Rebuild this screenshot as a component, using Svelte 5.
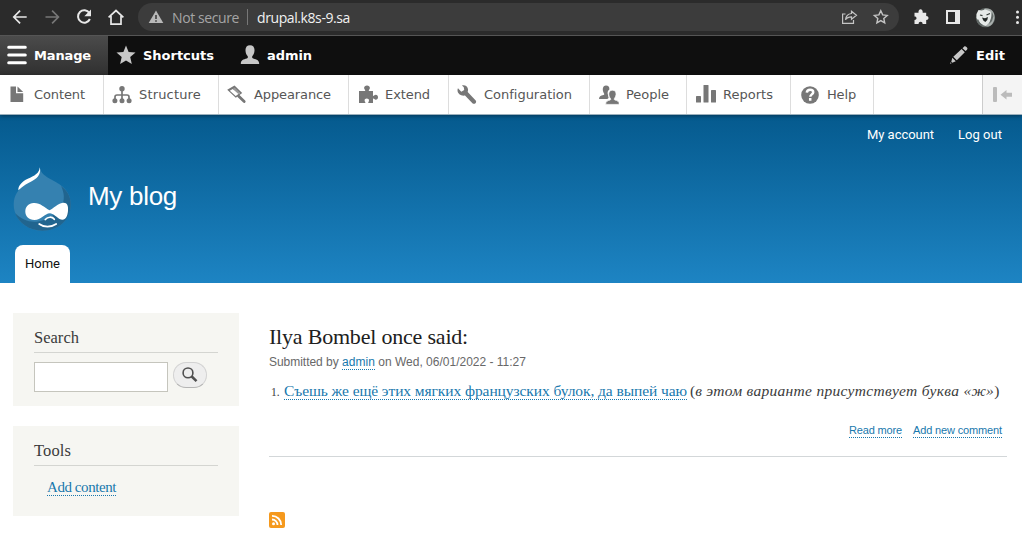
<script>
  const tray = [
    { label: 'Content', w: 104, tw: 51, icon: 'content' },
    { label: 'Structure', w: 115, tw: 62, icon: 'structure' },
    { label: 'Appearance', w: 130, tw: 77, icon: 'appearance' },
    { label: 'Extend', w: 100, tw: 45, icon: 'extend' },
    { label: 'Configuration', w: 141, tw: 88, icon: 'config' },
    { label: 'People', w: 97, tw: 43, icon: 'people' },
    { label: 'Reports', w: 104, tw: 50, icon: 'reports' },
    { label: 'Help', w: 83, tw: 29, icon: 'help' }
  ];

  // Adjusts tracking so a label occupies its designed width whatever font is available.
  function fit(node, width) {
    const natural = node.getBoundingClientRect().width;
    const count = [...node.textContent.trim()].length;
    node.style.letterSpacing = `${(width - natural) / count}px`;
  }
</script>

{#snippet puzzle()}
  <path d="M1 6h6c1-.6-.9-1.400-.9-3C6.100 1.300 7.300.4 9 .4s2.900.9 2.900 2.600c0 1.600-1.900 2.400-.9 3h4v4.600c.6 1 1.400-.9 2.700-.9 1.500 0 2.300 1 2.300 2.500s-.8 2.500-2.300 2.500c-1.300 0-2.100-1.900-2.700-.9V18h-4.500c-1-.5.500-1.300.5-2.600 0-1.200-.9-1.900-2.200-1.900s-2.200.7-2.200 1.900c0 1.300 1.500 2.100.5 2.600H1V6z" />
{/snippet}

<div class="page">
  <div class="browser">
    <svg class="nav-icons" width="136" height="35" viewBox="0 0 136 35" fill="none" stroke="#e8e8e8" stroke-width="1.700">
      <path d="M26.700 17H14M20.100 10.700 13.800 17l6.300 6.300" />
      <path stroke="#777" d="M45.500 17h12.700M52.100 10.700l6.300 6.300-6.300 6.300" />
      <path stroke-width="2" d="M89.400 13A6.200 6.200 0 1 0 89.900 19" />
      <path fill="#e8e8e8" stroke="none" d="M91 9.500v6.700h-6.700z" />
      <path d="M108.600 17.300 116 10.500l7.400 6.800M111 16v8.100h10V16" />
    </svg>
    <div class="address">
      <svg class="warn" width="16" height="14" viewBox="0 0 16 14"><path fill="#b8b8b8" d="M8 .4 15.300 13H.7z" /><path stroke="#3c3c3c" stroke-width="1.600" d="M8 5v4M8 10.200v1.600" /></svg>
      <span class="secure" use:fit={67}>Not secure</span>
      <i class="divider"></i>
      <span class="url" use:fit={93}>drupal.k8s-9.sa</span>
      <svg class="addr-icons" width="50" height="20" viewBox="840 7 50 20" fill="none" stroke="#c5c5c5" stroke-width="1.200">
        <path d="M845.500 14h-2.900v9.400h10.900V20M851.500 11.200l5 4-5 4v-2.400c-3 0-4.700.8-6 2.900.4-3.700 2.300-5.800 6-6.200z" />
        <path stroke-width="1.400" d="m880.800 10.700 1.900 4.200 4.500.5-3.400 3 .9 4.500-3.900-2.300-3.900 2.300.9-4.500-3.400-3 4.500-.5z" />
      </svg>
    </div>
    <svg class="ext-icons" width="123" height="35" viewBox="899 0 123 35">
      <path fill="#e8e8e8" d="M914.500 12.700h4c-.3-2.200.8-3.400 2.100-3.400s2.400 1.200 2.100 3.400h3.500v3.400c1.500 0 2.300.7 2.300 2s-.8 2-2.300 2V24h-3.600c0-1.500-.8-2.300-2-2.300s-2 .8-2 2.300h-4.100v-4c1.300 0 2-.7 2-1.700s-.7-1.700-2-1.700z" />
      <path fill="#e8e8e8" fill-rule="evenodd" d="M946 10h14v14h-14zm2 2v10h7V12z" />
      <circle cx="985.500" cy="17.700" r="9.600" fill="#626967" />
      <path fill="#a7adab" d="M984 9c7-2 10.500 3 10.500 8s-3 10-8 9.500z" />
      <path fill="#e6e9e8" d="m976.500 14 2-4 3 .5 4-1 5 2 1.500 5-2 5-4 4.500-4-1-3.500-4-2-3z" />
      <path fill="#626967" d="m978 19 2 4 4 2.500-4-.2-3-3zM992 12l1.500 4-1.500 5-3 3 2-6z" />
      <path stroke="#343a37" stroke-width="1.200" d="m980 15 2.500.7M986.500 15l3.500-1.500" />
      <path fill="#242827" d="m982 17.500 3 .7 3-1.200-.7 3-2 2-2-1.500z" />
      <circle cx="1017.500" cy="12" r="1.500" fill="#e8e8e8" /><circle cx="1017.500" cy="17.300" r="1.500" fill="#e8e8e8" /><circle cx="1017.500" cy="22.600" r="1.500" fill="#e8e8e8" />
    </svg>
  </div>

  <nav class="adminbar">
    <a class="tab manage">
      <svg width="20" height="20" viewBox="0 0 20 20"><path stroke="#fff" stroke-width="3" stroke-linecap="round" d="M1.700 2.300h16.600M1.700 10h16.600M1.700 17.700h16.600" /></svg>
      <b use:fit={57}>Manage</b>
    </a>
    <a class="tab shortcuts">
      <svg width="20" height="20" viewBox="0 0 20 20"><path fill="#c7c7c7" d="m10 .4 2.600 6.600 6.900.5-5.300 4.600 1.600 7L10 15.400l-5.900 3.700 1.600-7L.5 7.500 7.400 7z" /></svg>
      <b use:fit={71}>Shortcuts</b>
    </a>
    <a class="tab user">
      <svg width="20" height="20" viewBox="0 0 20 20"><path fill="#c7c7c7" d="M10 .3c3.200 0 4.700 2.300 4.500 5.300-.1 2.300-1 4.300-2.100 5.500-.5 1.100-.3 2 .8 2.500 3.300 1 6 1.500 6 5.400H.8c0-3.900 2.700-4.400 6-5.400 1.100-.5 1.300-1.400.8-2.500-1.200-1.200-2-3.200-2.100-5.500C5.300 2.600 6.800.3 10 .3z" /></svg>
      <b use:fit={45}>admin</b>
    </a>
    <a class="tab edit">
      <svg width="20" height="20" viewBox="0 0 20 20"><path fill="#c7c7c7" d="M13.500 3.200 15 1.800c.8-.7 1.500-.6 2.500.3 1.100 1 1.200 1.700.5 2.600l-1.400 1.400zM12.600 4.100l3.200 3.200-8 8-3.500-3.500zM3.300 12.800l3.500 3.500-3.500 1.400-1-1zM1.600 17.200l1 1-1.700.6z" /></svg>
      <b use:fit={29}>Edit</b>
    </a>
  </nav>

  <nav class="tray">
    {#each tray as item, i}
      <a style:width="{item.w}px" class:first={i === 0} class:late={i === 3 || i > 4}>
        <svg width="20" height="20" viewBox="0 0 20 20" fill="#777">
          {#if item.icon === 'content'}
            <path d="M3.500 1.500H9v6.800h7.200V17H3.500zM10.500 1.500l5.700 5.400h-5.700z" />
          {:else if item.icon === 'structure'}
            <circle cx="10" cy="3.700" r="2.700" /><path fill="none" stroke="#777" stroke-width="1.700" d="M10 5v11M3 15v-3q0-2 2-2h10q2 0 2 2v3" />
            <circle cx="2.900" cy="15.700" r="2.500" /><circle cx="10" cy="15.700" r="2.500" /><circle cx="17.100" cy="15.700" r="2.500" />
          {:else if item.icon === 'appearance'}
            <path fill-rule="evenodd" d="M7.500.5 15.200 8l-6.400 4.700L.2 4.700zM5.700 4 2.800 5.700l5.900 5.400 4.300-3z" />
            <path fill="#999" d="m5.700 4 2-1.500 5.500 5.500-1.800 1z" />
            <path stroke="#777" stroke-width="2.800" stroke-linecap="round" d="m11.500 11 5.700 5.500" />
          {:else if item.icon === 'extend'}
            {@render puzzle()}
          {:else if item.icon === 'config'}
            <path d="M5 .4C9.500-.3 12 2.800 10.700 7l8 8.500c1.400 1.600-.9 4.400-3 2.900L8 10.500C4.200 11.200.5 9 .5 5.300c0-1 .2-1.500.5-2l3.300 3.500L7.200 5l-.4-2.800z" />
          {:else if item.icon === 'people'}
            <path d="M7 .5c2.400 0 3.600 1.600 3.400 4C8.600 5.600 8.200 7.600 9 10l.6 3-1.300 1H0c0-2.500 1.600-3.200 4.500-4 1-.4.9-1 .4-1.800C3.200 5.500 3.300.5 7 .5z" />
            <path stroke="#fff" stroke-width=".7" d="M13.300 5.200c3 0 4 2 3.700 4.500-.2 1.700-.9 3-1.600 3.800-.4.800-.1 1.300.6 1.600 2.200.6 4.300 1 4.300 4.300H6.700c0-3.300 2-3.700 4.300-4.300.7-.3 1-.8.5-1.600C9 11 9 5.200 13.300 5.200z" />
          {:else if item.icon === 'reports'}
            <rect x="0" y="11" width="5" height="6.500" rx=".6" /><rect x="7.500" y="0" width="5" height="17.500" rx=".6" /><rect x="15" y="5" width="5" height="12.500" rx=".6" />
          {:else}
            <circle cx="10" cy="10" r="8.800" /><path stroke="#fff" fill="none" stroke-width="2.500" d="M6.800 7.600C7 5.500 8.500 4.700 10.200 4.700c1.800 0 3 1 3 2.500 0 2.200-2.900 2.200-2.900 4.600M10.200 13.100v2.600" />
          {/if}
        </svg>
        <span use:fit={item.tw}>{item.label}</span>
      </a>
    {/each}
    <button class="orient" aria-label="Vertical orientation">
      <svg width="20" height="16" viewBox="0 0 20 16" fill="#bbb"><rect x="0" y="0" width="4" height="15" rx="1" /><path d="M7.500 7.700l6-4.700v2.700H19v4h-5.500v2.700z" /></svg>
    </button>
  </nav>

  <header>
    <div class="account"><a use:fit={67}>My account</a><a use:fit={44}>Log out</a></div>
    <div class="brand">
      <svg width="60" height="66" viewBox="0 0 60 66">
        <path fill="#3581b0" d="M27.700 1.300c1 6 5.500 9 12 12.500C51 19.500 58.700 26 58.700 38.500c0 16-12.500 26.200-28.500 26.200S1.700 53 1.700 38.500C1.700 29 7 22 15.500 16.500 23 11.500 27 8 27.700 1.300z" />
        <path fill="#21658f" d="M49 20c6 4.500 9.700 10 9.700 18.500 0 16-12.500 26.200-28.500 26.200C17 64.700 7 57 3 47c8 8 18 11 29 7 18-7 24-20 17-34z" />
        <path fill="#fff" d="M27.700 1.300c1.600 5.500-1.200 10.200-6.700 13.200-6 3.300-9.500 5-14.600 9.800-.6-4.300 3.600-8.800 9.400-11.500C22.300 10 27.700 7 27.700 1.300z" />
        <path fill="#fff" d="M21.500 37c6.500-.5 11 4.500 16 7.300 4-1.500 8-7 13.500-7.500 4.200-.4 5.500 3 5 8.200-.5 4.800-2.200 8.800-5.500 8.800-4 0-7.500-5.800-12.500-6.600-5.500.2-9 6.800-15.500 6.800-5.800 0-9.200-3.700-9.200-8.500 0-5 3.500-8.200 8.200-8.500z" />
        <path stroke="#fff" fill="none" stroke-width="1.700" stroke-linecap="round" d="M33.300 53.500c2.500-3 7-3 9-.2M27.200 58c4.500 3.500 12 3.500 17 0" />
      </svg>
      <h1 use:fit={89}>My blog</h1>
    </div>
    <a class="home"><span use:fit={35}>Home</span></a>
  </header>

  <main>
    <aside>
      <section class="block search">
        <h2><span use:fit={45}>Search</span></h2>
        <div class="form">
          <input aria-label="Search" />
          <button aria-label="Search"><svg width="16" height="16" viewBox="0 0 16 16" fill="none" stroke="#505050"><circle cx="6" cy="5.900" r="4.900" stroke-width="1.600" /><path stroke-width="2.600" d="m9.500 9.200 5 4.900" /></svg></button>
        </div>
      </section>
      <section class="block tools">
        <h2><span use:fit={37}>Tools</span></h2>
        <a class="link" use:fit={69}>Add content</a>
      </section>
    </aside>
    <div class="content">
      <article>
        <h2><span use:fit={199}>Ilya Bombel once said:</span></h2>
        <p class="meta"><span use:fit={73}>Submitted by&nbsp;</span><a class="link" use:fit={33}>admin</a><span use:fit={151}>&nbsp;on Wed, 06/01/2022 - 11:27</span></p>
        <div class="quote"><span class="num">1.</span><a class="link" use:fit={403}>Съешь же ещё этих мягких французских булок, да выпей чаю</a><span class="paren">(</span><em use:fit={299}>в этом варианте присутствует буква «ж»</em><span>)</span></div>
        <div class="actions"><a class="link" use:fit={53}>Read more</a><a class="link" use:fit={89}>Add new comment</a></div>
      </article>
      <svg class="feed" width="16" height="16" viewBox="0 0 16 16"><rect width="16" height="16" rx="2" fill="#f5991d" /><circle cx="4.500" cy="11.700" r="1.500" fill="#fff" /><path fill="none" stroke="#fff" stroke-width="1.800" d="M3 7.500a5.500 5.500 0 0 1 5.500 5.500M3 3.800A9.200 9.200 0 0 1 12.200 13" /></svg>
    </div>
  </main>
</div>

<style>
  :global(body) { margin: 0; background: #fff; }
  * { box-sizing: border-box; }
  .page { width: 1022px; height: 537px; overflow: hidden; background: #fff; font-family: "Liberation Sans", sans-serif; }
  h1, h2, p { margin: 0; font-weight: 400; }
  svg { display: block; flex: none; }
  span, a, b, em, h1 { white-space: nowrap; }
  button { padding: 0; }

  .browser { height: 36px; display: flex; background: #2b2b2b; border-bottom: 1px solid #555; }
  .address { width: 761px; height: 28px; margin: 3px 0 0 2px; padding: 0 9px 0 10px; border-radius: 14px; background: #3c3c3c; display: flex; align-items: center; font: 14px "Open Sans", sans-serif; }
  .secure { margin-left: 8px; color: #a5a5a5; }
  .divider { width: 1px; height: 16px; margin: 0 9px 0 8px; background: #777; }
  .url { color: #f1f1f1; }
  .addr-icons { margin-left: auto; }

  .adminbar { height: 39px; display: flex; background: #0f0f0f; color: #fff; font: 13px "DejaVu Sans", sans-serif; }
  .tab { display: flex; align-items: center; gap: 7px; padding-bottom: 1px; }
  .manage { width: 108px; padding-left: 7px; background: linear-gradient(#4b4b4b, #303030); }
  .shortcuts { padding-left: 8px; }
  .user { padding-left: 26px; }
  .edit { margin-left: auto; padding-right: 17px; }

  .tray { height: 40px; display: flex; background: #fff; color: #565656; font: 13px "DejaVu Sans", sans-serif; border-bottom: 1px solid #9bb0bd; position: relative; box-shadow: 0 1px 4px rgba(0, 0, 0, .4); }
  .tray a { display: flex; align-items: center; gap: 7px; padding-left: 8px; border-right: 1px solid #ddd; }
  .tray .first { padding-left: 7px; }
  .tray .late { padding-left: 9px; }
  .orient { margin-left: auto; width: 40px; border: 0; border-left: 1px solid #ccc; background: #f4f4f4; padding-left: 10px; }

  header { height: 168px; background: linear-gradient(#055a8e, #1d84c3); color: #fff; padding: 0 20px 0 12px; display: flex; flex-direction: column; }
  .account { height: 38px; display: flex; justify-content: flex-end; align-items: center; gap: 24px; font: 13px Roboto, sans-serif; }
  .brand { height: 66px; margin-top: 13px; display: flex; gap: 16px; }
  h1 { font-size: 26px; line-height: 30px; margin-top: 15px; align-self: flex-start; }
  .home { width: 55px; height: 38px; margin: 13px 0 0 3px; padding-bottom: 2px; border-radius: 8px 8px 0 0; background: #fff; color: #111; display: flex; justify-content: center; align-items: center; font: 13px Roboto, sans-serif; }

  main { display: flex; gap: 30px; padding: 30px 15px 0 13px; color: #3b3b3b; font-family: "Liberation Serif", serif; }
  aside { width: 226px; display: flex; flex-direction: column; gap: 20px; }
  .block { background: #f6f6f2; padding: 15px 21px; }
  .search { height: 93px; }
  .tools { height: 90px; }
  .block h2 { height: 25px; border-bottom: 1px solid #d4d5d1; font-size: 16.500px; line-height: 20px; }
  .form { display: flex; margin-top: 9px; gap: 5px; }
  input { width: 134px; height: 30px; border: 1px solid #c5c5bd; background: #fff; }
  .form button { width: 34px; height: 26px; border: 1px solid #d2d2d2; border-bottom-color: #b4b4b4; border-radius: 13px; background: #eee; display: grid; place-items: center; }
  .link { color: #1878ad; border-bottom: 1px dotted #1878ad; }
  .tools .link { display: inline-block; margin: 13px 0 0 13px; font-size: 15px; line-height: 16px; }
  .content { width: 738px; }
  article { height: 144px; border-bottom: 1px solid #d3d7d9; }
  article h2 { padding-top: 10px; font-size: 22px; line-height: 28px; color: #202020; }
  .meta { display: flex; height: 16px; margin-top: 4px; font: 12px/14px "Liberation Sans", sans-serif; color: #686868; }
  .meta .link { height: 15px; }
  .quote { display: flex; height: 17px; margin-top: 12px; font-size: 15.500px; line-height: 16px; align-items: flex-start; }
  .num { width: 15px; padding-left: 2px; font-size: 11.500px; line-height: 18px; }
  .paren { margin-left: 3px; }
  .actions { display: flex; justify-content: flex-end; gap: 11px; margin: 24px 5px 0 0; font: 11px/13px "Liberation Sans", sans-serif; }
  .feed { margin-top: 55px; }
</style>
